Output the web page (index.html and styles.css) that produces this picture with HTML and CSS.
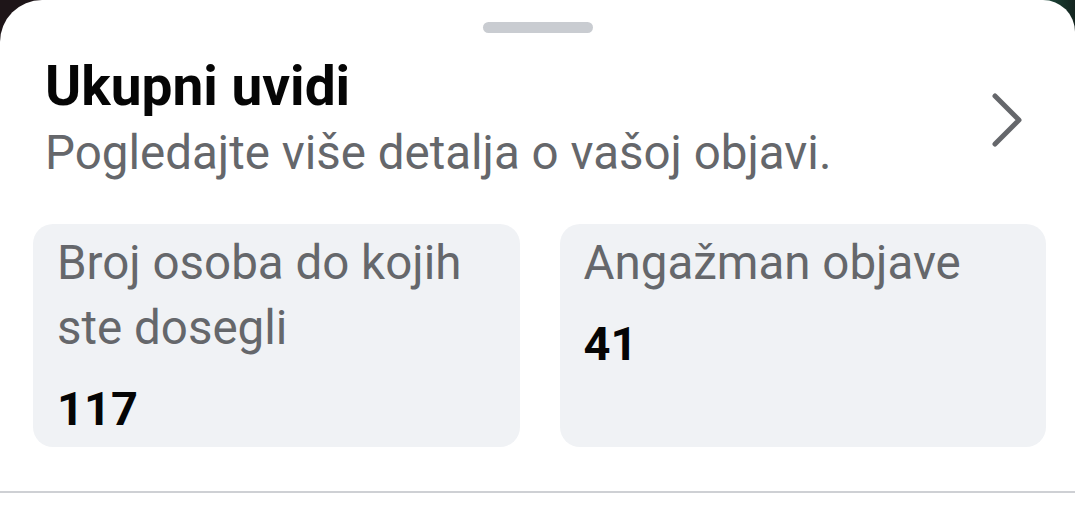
FILE: index.html
```html
<!DOCTYPE html>
<html lang="hr">
<head>
    <meta charset="UTF-8">
    <meta name="viewport" content="width=device-width, initial-scale=1.0">
    <title>Ukupni uvidi</title>
    <link rel="stylesheet" href="styles.css">
</head>
<body>
    <div class="sheet">
        <div class="handle"></div>

        <div class="summary">
            <div class="summary-text">
                <h2>Ukupni uvidi</h2>
                <p>Pogledajte više detalja o vašoj objavi.</p>
            </div>
            <svg class="chevron" width="34" height="56" viewBox="0 0 34 56">
                <path d="M4 4 L28 28 L4 52" fill="none" stroke="#65676b" stroke-width="5" stroke-linecap="round" stroke-linejoin="round"/>
            </svg>
        </div>

        <div class="stats">
            <div class="stat-card">
                <div class="stat-label">Broj osoba do kojih ste dosegli</div>
                <div class="stat-value">117</div>
            </div>
            <div class="stat-card">
                <div class="stat-label">Angažman objave</div>
                <div class="stat-value">41</div>
            </div>
        </div>

        <div class="divider"></div>
    </div>
</body>
</html>
```

FILE: styles.css
```css
/* General */
* {
    margin: 0;
    padding: 0;
    box-sizing: border-box;
}

body {
    font-family: Roboto, "Noto Sans", sans-serif;
    background: linear-gradient(90deg, #1e1518 0%, #1e1518 60%, #1d4a3c 97%, #14241f 100%);
    width: 1075px;
    height: 524px;
    overflow: hidden;
}

/* Bottom sheet */
.sheet {
    background: #fff;
    height: 524px;
    border-radius: 42px 32px 0 0;
    padding-top: 22px;
}

.handle {
    width: 110px;
    height: 11px;
    margin: 0 auto;
    background: #c9ccd1;
    border-radius: 6px;
}

/* Header row */
.summary {
    display: flex;
    align-items: center;
    justify-content: space-between;
    padding: 21px 50px 0 45px;
}

.summary h2 {
    font-size: 55px;
    font-weight: 700;
    color: #050505;
    line-height: 64px;
}

.summary p {
    font-size: 47.5px;
    color: #65676b;
    line-height: 64px;
    margin-top: 3px;
}

.chevron {
    display: block;
}

/* Stat cards */
.stats {
    display: grid;
    grid-template-columns: 1fr 1fr;
    gap: 40px;
    padding: 39px 29px 0 33px;
}

.stat-card {
    background: #f0f2f5;
    border-radius: 20px;
    padding: 7px 24px 6px;
    min-height: 223px;
}

.stat-label {
    font-size: 47.5px;
    color: #65676b;
    line-height: 65px;
}

.stat-value {
    font-size: 47px;
    font-weight: 700;
    color: #050505;
    line-height: 65px;
    margin-top: 15px;
}

.divider {
    height: 2px;
    background: #ced0d4;
    margin-top: 44px;
}
```
